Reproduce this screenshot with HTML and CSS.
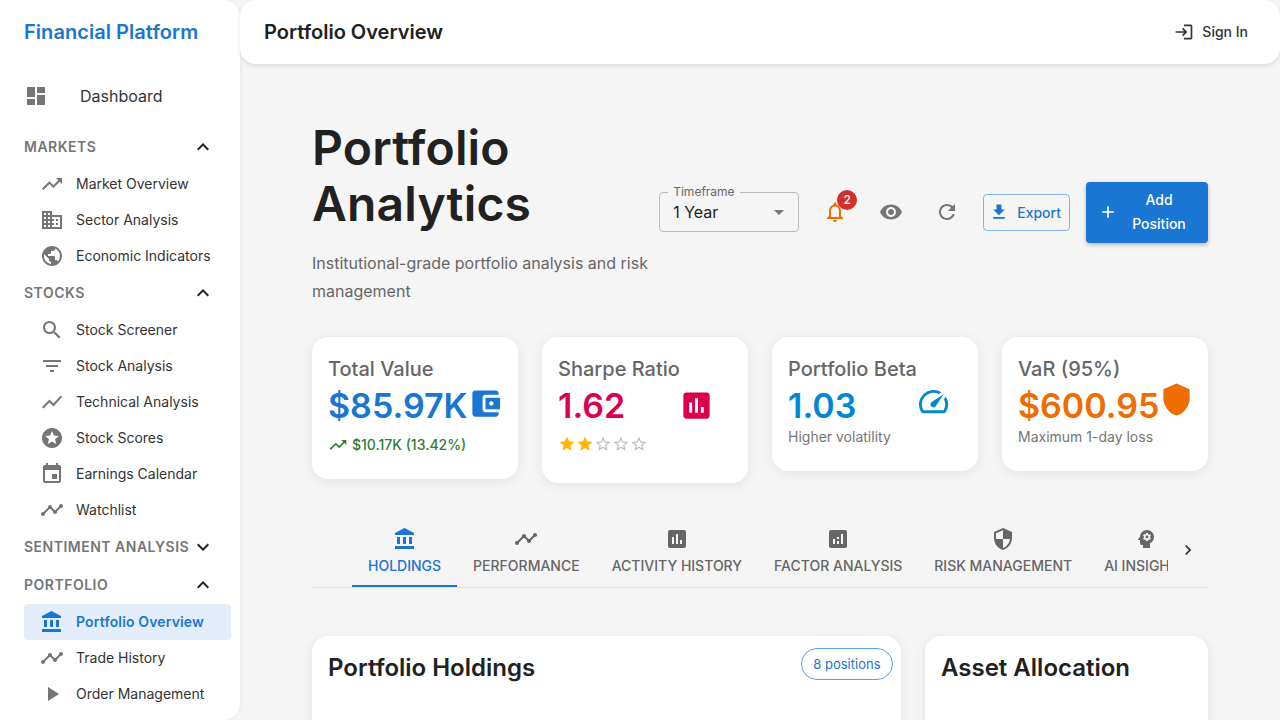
FILE: index.html
```html
<!DOCTYPE html>
<html lang="en">

<head>
    <meta charset="UTF-8">
    <meta name="viewport" content="width=device-width, initial-scale=1.0">
    <title>Portfolio Overview</title>
    <link rel="stylesheet" href="styles.css">
</head>

<body>
    <svg class="sprite" xmlns="http://www.w3.org/2000/svg">
        <symbol id="i-dashboard" viewBox="0 0 24 24"><path d="M3 13h8V3H3v10zm0 8h8v-6H3v6zm10 0h8V11h-8v10zm0-18v6h8V3h-8z"/></symbol>
        <symbol id="i-trending" viewBox="0 0 24 24"><path d="M16 6l2.29 2.29-4.88 4.88-4-4L2 16.59 3.41 18l6-6 4 4 6.3-6.29L22 12V6z"/></symbol>
        <symbol id="i-domain" viewBox="0 0 24 24"><path d="M12 7V3H2v18h20V7H12zM6 19H4v-2h2v2zm0-4H4v-2h2v2zm0-4H4V9h2v2zm0-4H4V5h2v2zm4 12H8v-2h2v2zm0-4H8v-2h2v2zm0-4H8V9h2v2zm0-4H8V5h2v2zm10 12h-8v-2h2v-2h-2v-2h2v-2h-2V9h8v10zm-2-8h-2v2h2v-2zm0 4h-2v2h2v-2z"/></symbol>
        <symbol id="i-public" viewBox="0 0 24 24"><path d="M12 2C6.48 2 2 6.48 2 12s4.48 10 10 10 10-4.48 10-10S17.52 2 12 2zm-1 17.93c-3.95-.49-7-3.85-7-7.93 0-.62.08-1.21.21-1.79L9 15v1c0 1.1.9 2 2 2v1.93zm6.9-2.54c-.26-.81-1-1.39-1.9-1.39h-1v-3c0-.55-.45-1-1-1H8v-2h2c.55 0 1-.45 1-1V7h2c1.1 0 2-.9 2-2v-.41c2.93 1.19 5 4.06 5 7.41 0 2.08-.8 3.97-2.1 5.39z"/></symbol>
        <symbol id="i-search" viewBox="0 0 24 24"><path d="M15.5 14h-.79l-.28-.27C15.41 12.59 16 11.11 16 9.5 16 5.91 13.09 3 9.5 3S3 5.91 3 9.5 5.91 16 9.5 16c1.61 0 3.09-.59 4.23-1.57l.27.28v.79l5 4.99L20.49 19l-4.99-5zm-6 0C7.01 14 5 11.99 5 9.5S7.01 5 9.5 5 14 7.01 14 9.5 11.99 14 9.5 14z"/></symbol>
        <symbol id="i-filter" viewBox="0 0 24 24"><path d="M10 18h4v-2h-4v2zM3 6v2h18V6H3zm3 7h12v-2H6v2z"/></symbol>
        <symbol id="i-showchart" viewBox="0 0 24 24"><path d="M3.5 18.49l6-6.01 4 4L22 6.92l-1.41-1.41-7.09 7.97-4-4L2 16.99z"/></symbol>
        <symbol id="i-stars" viewBox="0 0 24 24"><path d="M11.99 2C6.47 2 2 6.48 2 12s4.47 10 9.99 10C17.52 22 22 17.52 22 12S17.52 2 11.99 2zm4.24 16L12 15.45 7.77 18l1.12-4.81-3.73-3.23 4.92-.42L12 5l1.92 4.53 4.92.42-3.73 3.23L16.23 18z"/></symbol>
        <symbol id="i-event" viewBox="0 0 24 24"><path d="M17 12h-5v5h5v-5zM16 1v2H8V1H6v2H5c-1.11 0-1.99.9-1.99 2L3 19c0 1.1.89 2 2 2h14c1.1 0 2-.9 2-2V5c0-1.1-.9-2-2-2h-1V1h-2zm3 18H5V8h14v11z"/></symbol>
        <symbol id="i-timeline" viewBox="0 0 24 24"><path d="M23 8c0 1.1-.9 2-2 2-.18 0-.35-.02-.51-.07l-3.56 3.55c.05.16.07.34.07.52 0 1.1-.9 2-2 2s-2-.9-2-2c0-.18.02-.36.07-.52l-2.55-2.55c-.16.05-.34.07-.52.07s-.36-.02-.52-.07l-4.55 4.56c.05.16.07.33.07.51 0 1.1-.9 2-2 2s-2-.9-2-2 .9-2 2-2c.18 0 .35.02.51.07l4.56-4.55C8.02 9.36 8 9.18 8 9c0-1.1.9-2 2-2s2 .9 2 2c0 .18-.02.36-.07.52l2.55 2.55c.16-.05.34-.07.52-.07s.36.02.52.07l3.55-3.56C19.02 8.35 19 8.18 19 8c0-1.1.9-2 2-2s2 .9 2 2z"/></symbol>
        <symbol id="i-bank" viewBox="0 0 24 24"><path d="M4 10v7h3v-7H4zm6 0v7h3v-7h-3zM2 22h19v-3H2v3zm14-12v7h3v-7h-3zm-4.5-9L2 6v2h19V6l-9.5-5z"/></symbol>
        <symbol id="i-play" viewBox="0 0 24 24"><path d="M8 5v14l11-7z"/></symbol>
        <symbol id="i-less" viewBox="0 0 24 24"><path d="M12 8l-6 6 1.41 1.41L12 10.83l4.59 4.58L18 14z"/></symbol>
        <symbol id="i-more" viewBox="0 0 24 24"><path d="M16.59 8.59L12 13.17 7.41 8.59 6 10l6 6 6-6z"/></symbol>
        <symbol id="i-login" viewBox="0 0 24 24"><path d="M11 7 9.6 8.4l2.6 2.6H2v2h10.2l-2.6 2.6L11 17l5-5-5-5zm9 12h-8v2h8c1.1 0 2-.9 2-2V5c0-1.1-.9-2-2-2h-8v2h8v14z"/></symbol>
        <symbol id="i-bell" viewBox="0 0 24 24"><path d="M12 22c1.1 0 2-.9 2-2h-4c0 1.1.9 2 2 2zm6-6v-5c0-3.07-1.63-5.64-4.5-6.32V4c0-.83-.67-1.5-1.5-1.5s-1.5.67-1.5 1.5v.68C7.64 5.36 6 7.92 6 11v5l-2 2v1h16v-1l-2-2zm-2 1H8v-6c0-2.48 1.51-4.5 4-4.5s4 2.02 4 4.5v6z"/></symbol>
        <symbol id="i-eye" viewBox="0 0 24 24"><path d="M12 4.5C7 4.5 2.73 7.61 1 12c1.73 4.39 6 7.5 11 7.5s9.27-3.11 11-7.5c-1.73-4.39-6-7.5-11-7.5zM12 17c-2.76 0-5-2.24-5-5s2.24-5 5-5 5 2.24 5 5-2.24 5-5 5zm0-8c-1.66 0-3 1.34-3 3s1.34 3 3 3 3-1.34 3-3-1.34-3-3-3z"/></symbol>
        <symbol id="i-refresh" viewBox="0 0 24 24"><path d="M17.65 6.35C16.2 4.9 14.21 4 12 4c-4.42 0-7.99 3.58-7.99 8s3.57 8 7.99 8c3.73 0 6.84-2.55 7.73-6h-2.08c-.82 2.33-3.04 4-5.65 4-3.31 0-6-2.69-6-6s2.69-6 6-6c1.66 0 3.14.69 4.22 1.78L13 11h7V4l-2.35 2.35z"/></symbol>
        <symbol id="i-download" viewBox="0 0 24 24"><path d="M19 9h-4V3H9v6H5l7 7 7-7zM5 18v2h14v-2H5z"/></symbol>
        <symbol id="i-add" viewBox="0 0 24 24"><path d="M19 13h-6v6h-2v-6H5v-2h6V5h2v6h6v2z"/></symbol>
        <symbol id="i-wallet" viewBox="0 0 24 24"><path d="M21 18v1c0 1.1-.9 2-2 2H5c-1.11 0-2-.9-2-2V5c0-1.1.89-2 2-2h14c1.1 0 2 .9 2 2v1h-9c-1.11 0-2 .9-2 2v8c0 1.1.89 2 2 2h9zm-9-2h10V8H12v8zm4-2.5c-.83 0-1.5-.67-1.5-1.5s.67-1.5 1.5-1.5 1.5.67 1.5 1.5-.67 1.5-1.5 1.5z"/></symbol>
        <symbol id="i-assessment" viewBox="0 0 24 24"><path d="M19 3H5c-1.1 0-2 .9-2 2v14c0 1.1.9 2 2 2h14c1.1 0 2-.9 2-2V5c0-1.1-.9-2-2-2zM9 17H7v-7h2v7zm4 0h-2V7h2v10zm4 0h-2v-4h2v4z"/></symbol>
        <symbol id="i-speed" viewBox="0 0 24 24"><path d="M20.38 8.57l-1.23 1.85a8 8 0 0 1-.22 7.58H5.07A8 8 0 0 1 15.58 6.85l1.85-1.23A10 10 0 0 0 3.35 19a2 2 0 0 0 1.72 1h13.85a2 2 0 0 0 1.74-1 10 10 0 0 0-.27-10.44zm-9.79 6.84a2 2 0 0 0 2.83 0l5.66-8.49-8.49 5.66a2 2 0 0 0 0 2.83z"/></symbol>
        <symbol id="i-shield" viewBox="0 0 24 24"><path d="M12 1 3 5v6c0 5.55 3.84 10.74 9 12 5.16-1.26 9-6.45 9-12V5l-9-4z"/></symbol>
        <symbol id="i-security" viewBox="0 0 24 24"><path d="M12 1L3 5v6c0 5.55 3.84 10.74 9 12 5.16-1.26 9-6.45 9-12V5l-9-4zm0 10.99h7c-.53 4.12-3.28 7.79-7 8.94V12H5V6.3l7-3.11v8.8z"/></symbol>
        <symbol id="i-analytics" viewBox="0 0 24 24"><path d="M19 3H5c-1.1 0-2 .9-2 2v14c0 1.1.9 2 2 2h14c1.1 0 2-.9 2-2V5c0-1.1-.9-2-2-2zM9 17H7v-5h2v5zm4 0h-2v-3h2v3zm0-5h-2v-2h2v2zm4 5h-2V7h2v10z"/></symbol>
        <symbol id="i-psychology" viewBox="0 0 24 24"><path d="M13 8.57c-.79 0-1.43.64-1.43 1.43s.64 1.43 1.43 1.43 1.43-.64 1.43-1.43-.64-1.43-1.43-1.43z"/><path d="M13 3C9.25 3 6.2 5.94 6.02 9.64L4.1 12.2c-.25.33-.01.8.4.8H6v3c0 1.1.9 2 2 2h1v3h7v-4.68c2.36-1.12 4-3.53 4-6.32 0-3.87-3.13-7-7-7zm3 7c0 .13-.01.26-.02.39l.83.66c.08.06.1.16.05.25l-.8 1.39c-.05.09-.16.12-.24.09l-.99-.4c-.21.16-.43.29-.67.39L14 13.83c-.01.1-.1.17-.2.17h-1.6c-.1 0-.18-.07-.2-.17l-.15-1.06c-.25-.1-.47-.23-.68-.39l-.99.4c-.09.03-.2 0-.25-.09l-.8-1.39c-.05-.08-.03-.19.05-.25l.84-.66c-.01-.13-.02-.26-.02-.39s.02-.27.04-.39l-.85-.66c-.08-.06-.1-.16-.05-.26l.8-1.38c.05-.09.15-.12.24-.09l1 .4c.2-.15.43-.29.67-.39L12 6.17c.02-.1.1-.17.2-.17h1.6c.1 0 .18.07.2.17l.15 1.06c.24.1.46.23.67.39l1-.4c.09-.03.2 0 .24.09l.8 1.38c.05.09.03.2-.05.26l-.85.66c.03.12.04.25.04.39z"/></symbol>
        <symbol id="i-chevron" viewBox="0 0 24 24"><path d="M10 6 8.59 7.41 13.17 12l-4.58 4.59L10 18l6-6z"/></symbol>
        <symbol id="i-drop" viewBox="0 0 24 24"><path d="M7 10l5 5 5-5z"/></symbol>
        <symbol id="i-star" viewBox="0 0 24 24"><path d="M12 17.27L18.18 21l-1.64-7.03L22 9.24l-7.19-.61L12 2 9.19 8.63 2 9.24l5.46 4.73L5.82 21z"/></symbol>
        <symbol id="i-star-border" viewBox="0 0 24 24"><path d="M22 9.24l-7.19-.62L12 2 9.19 8.63 2 9.24l5.46 4.73L5.82 21 12 17.27 18.18 21l-1.63-7.03L22 9.24zM12 15.4l-3.76 2.27 1-4.28-3.32-2.88 4.38-.38L12 6.1l1.71 4.04 4.38.38-3.32 2.88 1 4.28L12 15.4z"/></symbol>
    </svg>

    <aside class="sidebar">
        <div class="logo">Financial Platform</div>
        <nav class="nav">
            <a class="nav-top"><svg class="icon"><use href="#i-dashboard"/></svg><span>Dashboard</span></a>

            <div class="nav-head"><span>Markets</span><svg class="icon"><use href="#i-less"/></svg></div>
            <a class="nav-item"><svg class="icon"><use href="#i-trending"/></svg><span>Market Overview</span></a>
            <a class="nav-item"><svg class="icon"><use href="#i-domain"/></svg><span>Sector Analysis</span></a>
            <a class="nav-item"><svg class="icon"><use href="#i-public"/></svg><span>Economic Indicators</span></a>

            <div class="nav-head"><span>Stocks</span><svg class="icon"><use href="#i-less"/></svg></div>
            <a class="nav-item"><svg class="icon"><use href="#i-search"/></svg><span>Stock Screener</span></a>
            <a class="nav-item"><svg class="icon"><use href="#i-filter"/></svg><span>Stock Analysis</span></a>
            <a class="nav-item"><svg class="icon"><use href="#i-showchart"/></svg><span>Technical Analysis</span></a>
            <a class="nav-item"><svg class="icon"><use href="#i-stars"/></svg><span>Stock Scores</span></a>
            <a class="nav-item"><svg class="icon"><use href="#i-event"/></svg><span>Earnings Calendar</span></a>
            <a class="nav-item"><svg class="icon"><use href="#i-timeline"/></svg><span>Watchlist</span></a>

            <div class="nav-head"><span>Sentiment Analysis</span><svg class="icon"><use href="#i-more"/></svg></div>

            <div class="nav-head"><span>Portfolio</span><svg class="icon"><use href="#i-less"/></svg></div>
            <a class="nav-item active"><svg class="icon"><use href="#i-bank"/></svg><span>Portfolio Overview</span></a>
            <a class="nav-item"><svg class="icon"><use href="#i-timeline"/></svg><span>Trade History</span></a>
            <a class="nav-item"><svg class="icon"><use href="#i-play"/></svg><span>Order Management</span></a>
        </nav>
    </aside>

    <div class="main">
        <header class="topbar">
            <div class="topbar-title">Portfolio Overview</div>
            <a class="signin"><svg class="icon-20"><use href="#i-login"/></svg><span>Sign In</span></a>
        </header>

        <main class="content">
            <section class="page-head">
                <div class="page-title">
                    <h1>Portfolio Analytics</h1>
                    <p>Institutional-grade portfolio analysis and risk management</p>
                </div>
                <div class="controls">
                    <div class="select">
                        <label>Timeframe</label>
                        <span>1 Year</span>
                        <svg class="icon"><use href="#i-drop"/></svg>
                    </div>
                    <button class="icon-btn bell">
                        <svg class="icon"><use href="#i-bell"/></svg>
                        <span class="badge">2</span>
                    </button>
                    <button class="icon-btn"><svg class="icon"><use href="#i-eye"/></svg></button>
                    <button class="icon-btn"><svg class="icon"><use href="#i-refresh"/></svg></button>
                    <button class="btn-outline"><svg class="icon-20"><use href="#i-download"/></svg>Export</button>
                    <button class="btn-primary"><svg class="icon-20"><use href="#i-add"/></svg><span>Add Position</span></button>
                </div>
            </section>

            <section class="stats">
                <div class="card stat">
                    <div class="stat-title">Total Value</div>
                    <div class="stat-row blue">
                        <span class="stat-value">$85.97K</span>
                        <svg class="stat-icon wallet"><use href="#i-wallet"/></svg>
                    </div>
                    <div class="stat-change"><svg class="icon-20"><use href="#i-trending"/></svg>$10.17K (13.42%)</div>
                </div>
                <div class="card stat">
                    <div class="stat-title">Sharpe Ratio</div>
                    <div class="stat-row pink">
                        <span class="stat-value">1.62</span>
                        <svg class="stat-icon chart"><use href="#i-assessment"/></svg>
                    </div>
                    <div class="stars">
                        <svg class="on"><use href="#i-star"/></svg>
                        <svg class="on"><use href="#i-star"/></svg>
                        <svg><use href="#i-star-border"/></svg>
                        <svg><use href="#i-star-border"/></svg>
                        <svg><use href="#i-star-border"/></svg>
                    </div>
                </div>
                <div class="card stat">
                    <div class="stat-title">Portfolio Beta</div>
                    <div class="stat-row sky">
                        <span class="stat-value">1.03</span>
                        <svg class="stat-icon gauge"><use href="#i-speed"/></svg>
                    </div>
                    <div class="stat-note">Higher volatility</div>
                </div>
                <div class="card stat">
                    <div class="stat-title">VaR (95%)</div>
                    <div class="stat-row orange">
                        <span class="stat-value">$600.95</span>
                        <svg class="stat-icon shield"><use href="#i-shield"/></svg>
                    </div>
                    <div class="stat-note">Maximum 1-day loss</div>
                </div>
            </section>

            <section class="tabs">
                <div class="tab-list">
                    <a class="tab active"><svg class="icon"><use href="#i-bank"/></svg>Holdings</a>
                    <a class="tab"><svg class="icon"><use href="#i-timeline"/></svg>Performance</a>
                    <a class="tab"><svg class="icon"><use href="#i-assessment"/></svg>Activity History</a>
                    <a class="tab"><svg class="icon"><use href="#i-analytics"/></svg>Factor Analysis</a>
                    <a class="tab"><svg class="icon"><use href="#i-security"/></svg>Risk Management</a>
                    <a class="tab"><svg class="icon"><use href="#i-psychology"/></svg>AI Insights</a>
                </div>
                <div class="tab-scroll"><svg class="icon-20"><use href="#i-chevron"/></svg></div>
            </section>

            <section class="panels">
                <div class="card panel panel-wide">
                    <h2>Portfolio Holdings</h2>
                    <span class="chip">8 positions</span>
                </div>
                <div class="card panel panel-side">
                    <h2>Asset Allocation</h2>
                </div>
            </section>
        </main>
    </div>
</body>

</html>
```

FILE: styles.css
```css
html,
body {
    height: 100%;
    margin: 0px;
    overflow: hidden;
}

body {
    display: flex;
    background: #f5f5f5;
    color: #212121;
    font-family: Inter, "Noto Sans", sans-serif;
}

.sprite {
    display: none;
}

.icon {
    display: block;
    flex: none;
    width: 24px;
    height: 24px;
    fill: currentColor;
}

.icon-20 {
    display: block;
    flex: none;
    width: 20px;
    height: 20px;
    fill: currentColor;
}

/* sidebar */
.sidebar {
    flex: none;
    width: 240px;
    height: 720px;
    box-sizing: border-box;
    background: #fff;
    border-radius: 0 16px 16px 0;
    box-shadow: 0 0 4px rgba(0, 0, 0, 0.08);
    overflow: hidden;
}

.logo {
    height: 64px;
    padding-left: 24px;
    line-height: 64px;
    font-size: 20px;
    font-weight: 600;
    letter-spacing: 0.05px;
    color: #1976d2;
}

.nav {
    padding: 8px 9px 0 24px;
}

.nav-top {
    display: flex;
    align-items: center;
    height: 48px;
    margin-bottom: 8px;
    font-size: 16px;
    color: #333;
}

.nav-top .icon {
    margin-right: 32px;
    color: #757575;
}

.nav-head {
    display: flex;
    align-items: center;
    justify-content: space-between;
    height: 38px;
    padding-right: 16px;
    font-size: 14px;
    font-weight: 600;
    letter-spacing: 0.5px;
    line-height: 20px;
    white-space: nowrap;
    text-transform: uppercase;
    color: #757575;
}

.nav-head .icon {
    color: #212121;
}

.nav-item {
    display: flex;
    align-items: center;
    gap: 12px;
    height: 36px;
    padding-left: 16px;
    border-radius: 4px;
    font-size: 14px;
    line-height: 20px;
    color: #333;
}

.nav-item .icon {
    color: #757575;
}

.nav-item.active {
    background: #e3eefa;
    font-weight: 600;
    letter-spacing: 0.15px;
    color: #1976d2;
}

.nav-item.active .icon {
    color: #1976d2;
}

/* top bar */
.main {
    flex: 1;
    min-width: 0;
}

.topbar {
    display: flex;
    align-items: center;
    justify-content: space-between;
    height: 64px;
    padding: 0 32px 0 24px;
    background: #fff;
    border-radius: 16px;
    box-shadow: 0 2px 4px rgba(0, 0, 0, 0.1);
}

.topbar-title {
    font-size: 20px;
    font-weight: 600;
}

.signin {
    display: flex;
    align-items: center;
    gap: 8px;
    font-size: 14px;
    font-weight: 500;
    line-height: 20px;
    color: #333;
}

/* page content */
.content {
    padding: 56px 72px 0;
}

.page-head {
    display: flex;
    align-items: center;
    justify-content: space-between;
}

.page-title {
    width: 340px;
}

.page-title h1 {
    margin: 0px;
    font-size: 48px;
    line-height: 56px;
    font-weight: 600;
    letter-spacing: 0.15px;
}

.page-title p {
    margin: 17px 0 0;
    font-size: 16px;
    line-height: 28px;
    color: #666;
}

.controls {
    display: flex;
    align-items: center;
    gap: 16px;
    margin-bottom: 1px;
}

.select {
    position: relative;
    display: flex;
    align-items: center;
    justify-content: space-between;
    width: 140px;
    height: 40px;
    box-sizing: border-box;
    padding: 0 7px 0 13px;
    border: 1px solid #bdbdbd;
    border-radius: 4px;
    font-size: 16px;
}

.select label {
    position: absolute;
    top: -9px;
    left: 8px;
    padding: 0 5px;
    background: #f5f5f5;
    font-size: 12px;
    line-height: 16px;
    color: #666;
}

.select .icon {
    color: #757575;
}

.icon-btn {
    position: relative;
    display: flex;
    align-items: center;
    justify-content: center;
    width: 40px;
    height: 40px;
    padding: 0px;
    border: 0;
    background: none;
    font-family: inherit;
    color: #757575;
}

.bell {
    color: #ef6c00;
}

.badge {
    position: absolute;
    top: -2px;
    right: -2px;
    width: 20px;
    height: 20px;
    border-radius: 50%;
    background: #d32f2f;
    font-size: 12px;
    font-weight: 500;
    line-height: 20px;
    color: #fff;
}

.btn-outline {
    display: flex;
    align-items: center;
    gap: 8px;
    height: 37px;
    padding: 0 8px 0 5px;
    border: 1px solid rgba(25, 118, 210, 0.5);
    border-radius: 4px;
    background: none;
    font-family: inherit;
    font-size: 14px;
    font-weight: 500;
    color: #1976d2;
}

.btn-primary {
    display: flex;
    align-items: center;
    gap: 8px;
    width: 122px;
    height: 61px;
    padding: 0 16px 0 12px;
    border: 0;
    border-radius: 4px;
    background: #1976d2;
    box-shadow: 0 2px 4px rgba(0, 0, 0, 0.25);
    font-family: inherit;
    font-size: 14px;
    font-weight: 500;
    line-height: 24px;
    color: #fff;
}

.btn-primary span {
    flex: 1;
    text-align: center;
}

/* cards */
.card {
    background: #fff;
    border-radius: 16px;
    box-shadow: 0 2px 12px rgba(0, 0, 0, 0.08);
}

.stats {
    display: grid;
    grid-template-columns: repeat(4, 1fr);
    gap: 24px;
    align-items: start;
    margin-top: 32px;
}

.stat {
    min-width: 0;
    padding: 16px 16px 24px;
}

.stat-title {
    font-size: 20px;
    font-weight: 500;
    line-height: 32px;
    color: #666;
}

.stat-row {
    display: flex;
    justify-content: space-between;
    align-items: flex-start;
    height: 42px;
}

.stat-value {
    flex: none;
    font-size: 34px;
    font-weight: 600;
    line-height: 42px;
}

.stat-icon {
    flex: none;
    width: 35px;
    height: 35px;
    fill: currentColor;
}

.wallet {
    margin-top: 1px;
}

.chart {
    margin: 3px 18px 0 0;
}

.gauge {
    margin: -1px 11px 0 0;
}

.shield {
    margin-top: -3px;
}

.blue {
    color: #1976d2;
}

.pink {
    color: #dc004e;
}

.sky {
    color: #0288d1;
}

.orange {
    color: #ef6c00;
}

.stat-note {
    height: 20px;
    font-size: 14px;
    line-height: 20px;
    color: #757575;
}

.stat-change {
    display: flex;
    align-items: center;
    gap: 4px;
    height: 20px;
    margin-top: 8px;
    font-size: 14px;
    font-weight: 500;
    line-height: 20px;
    color: #2e7d32;
}

.stars {
    display: flex;
    height: 24px;
    margin-top: 8px;
}

.stars svg {
    width: 18px;
    height: 18px;
    fill: #bdbdbd;
}

.stars svg.on {
    fill: #ffb400;
}

/* tabs */
.tabs {
    display: flex;
    box-sizing: border-box;
    height: 72px;
    margin-top: 33px;
    padding-left: 40px;
    border-bottom: 1px solid #e0e0e0;
}

.tab-list {
    display: flex;
    flex: 1;
    min-width: 0;
    overflow: hidden;
}

.tab {
    flex: none;
    display: flex;
    flex-direction: column;
    align-items: center;
    gap: 3px;
    box-sizing: border-box;
    height: 71px;
    padding: 11px 16px 0;
    font-size: 14px;
    font-weight: 500;
    line-height: 24px;
    text-transform: uppercase;
    color: #666;
}

.tab.active {
    border-bottom: 2px solid #1976d2;
    color: #1976d2;
}

.tab-scroll {
    flex: none;
    display: flex;
    align-items: center;
    justify-content: center;
    width: 40px;
    padding-bottom: 3px;
    color: #333;
}

/* panels */
.panels {
    display: flex;
    gap: 24px;
    margin-top: 48px;
}

.panel {
    display: flex;
    align-items: flex-start;
    justify-content: space-between;
    box-sizing: border-box;
    height: 300px;
    padding: 12px 8px 0 16px;
}

.panel-wide {
    flex: none;
    width: 589px;
}

.panel-side {
    flex: 1;
}

.panel h2 {
    margin: 0px;
    font-size: 24px;
    font-weight: 600;
    line-height: 40px;
}

.chip {
    box-sizing: border-box;
    height: 32px;
    padding: 0 11.5px;
    border: 1px solid rgba(25, 118, 210, 0.7);
    border-radius: 16px;
    font-size: 13px;
    line-height: 30px;
    color: #1976d2;
}
```
